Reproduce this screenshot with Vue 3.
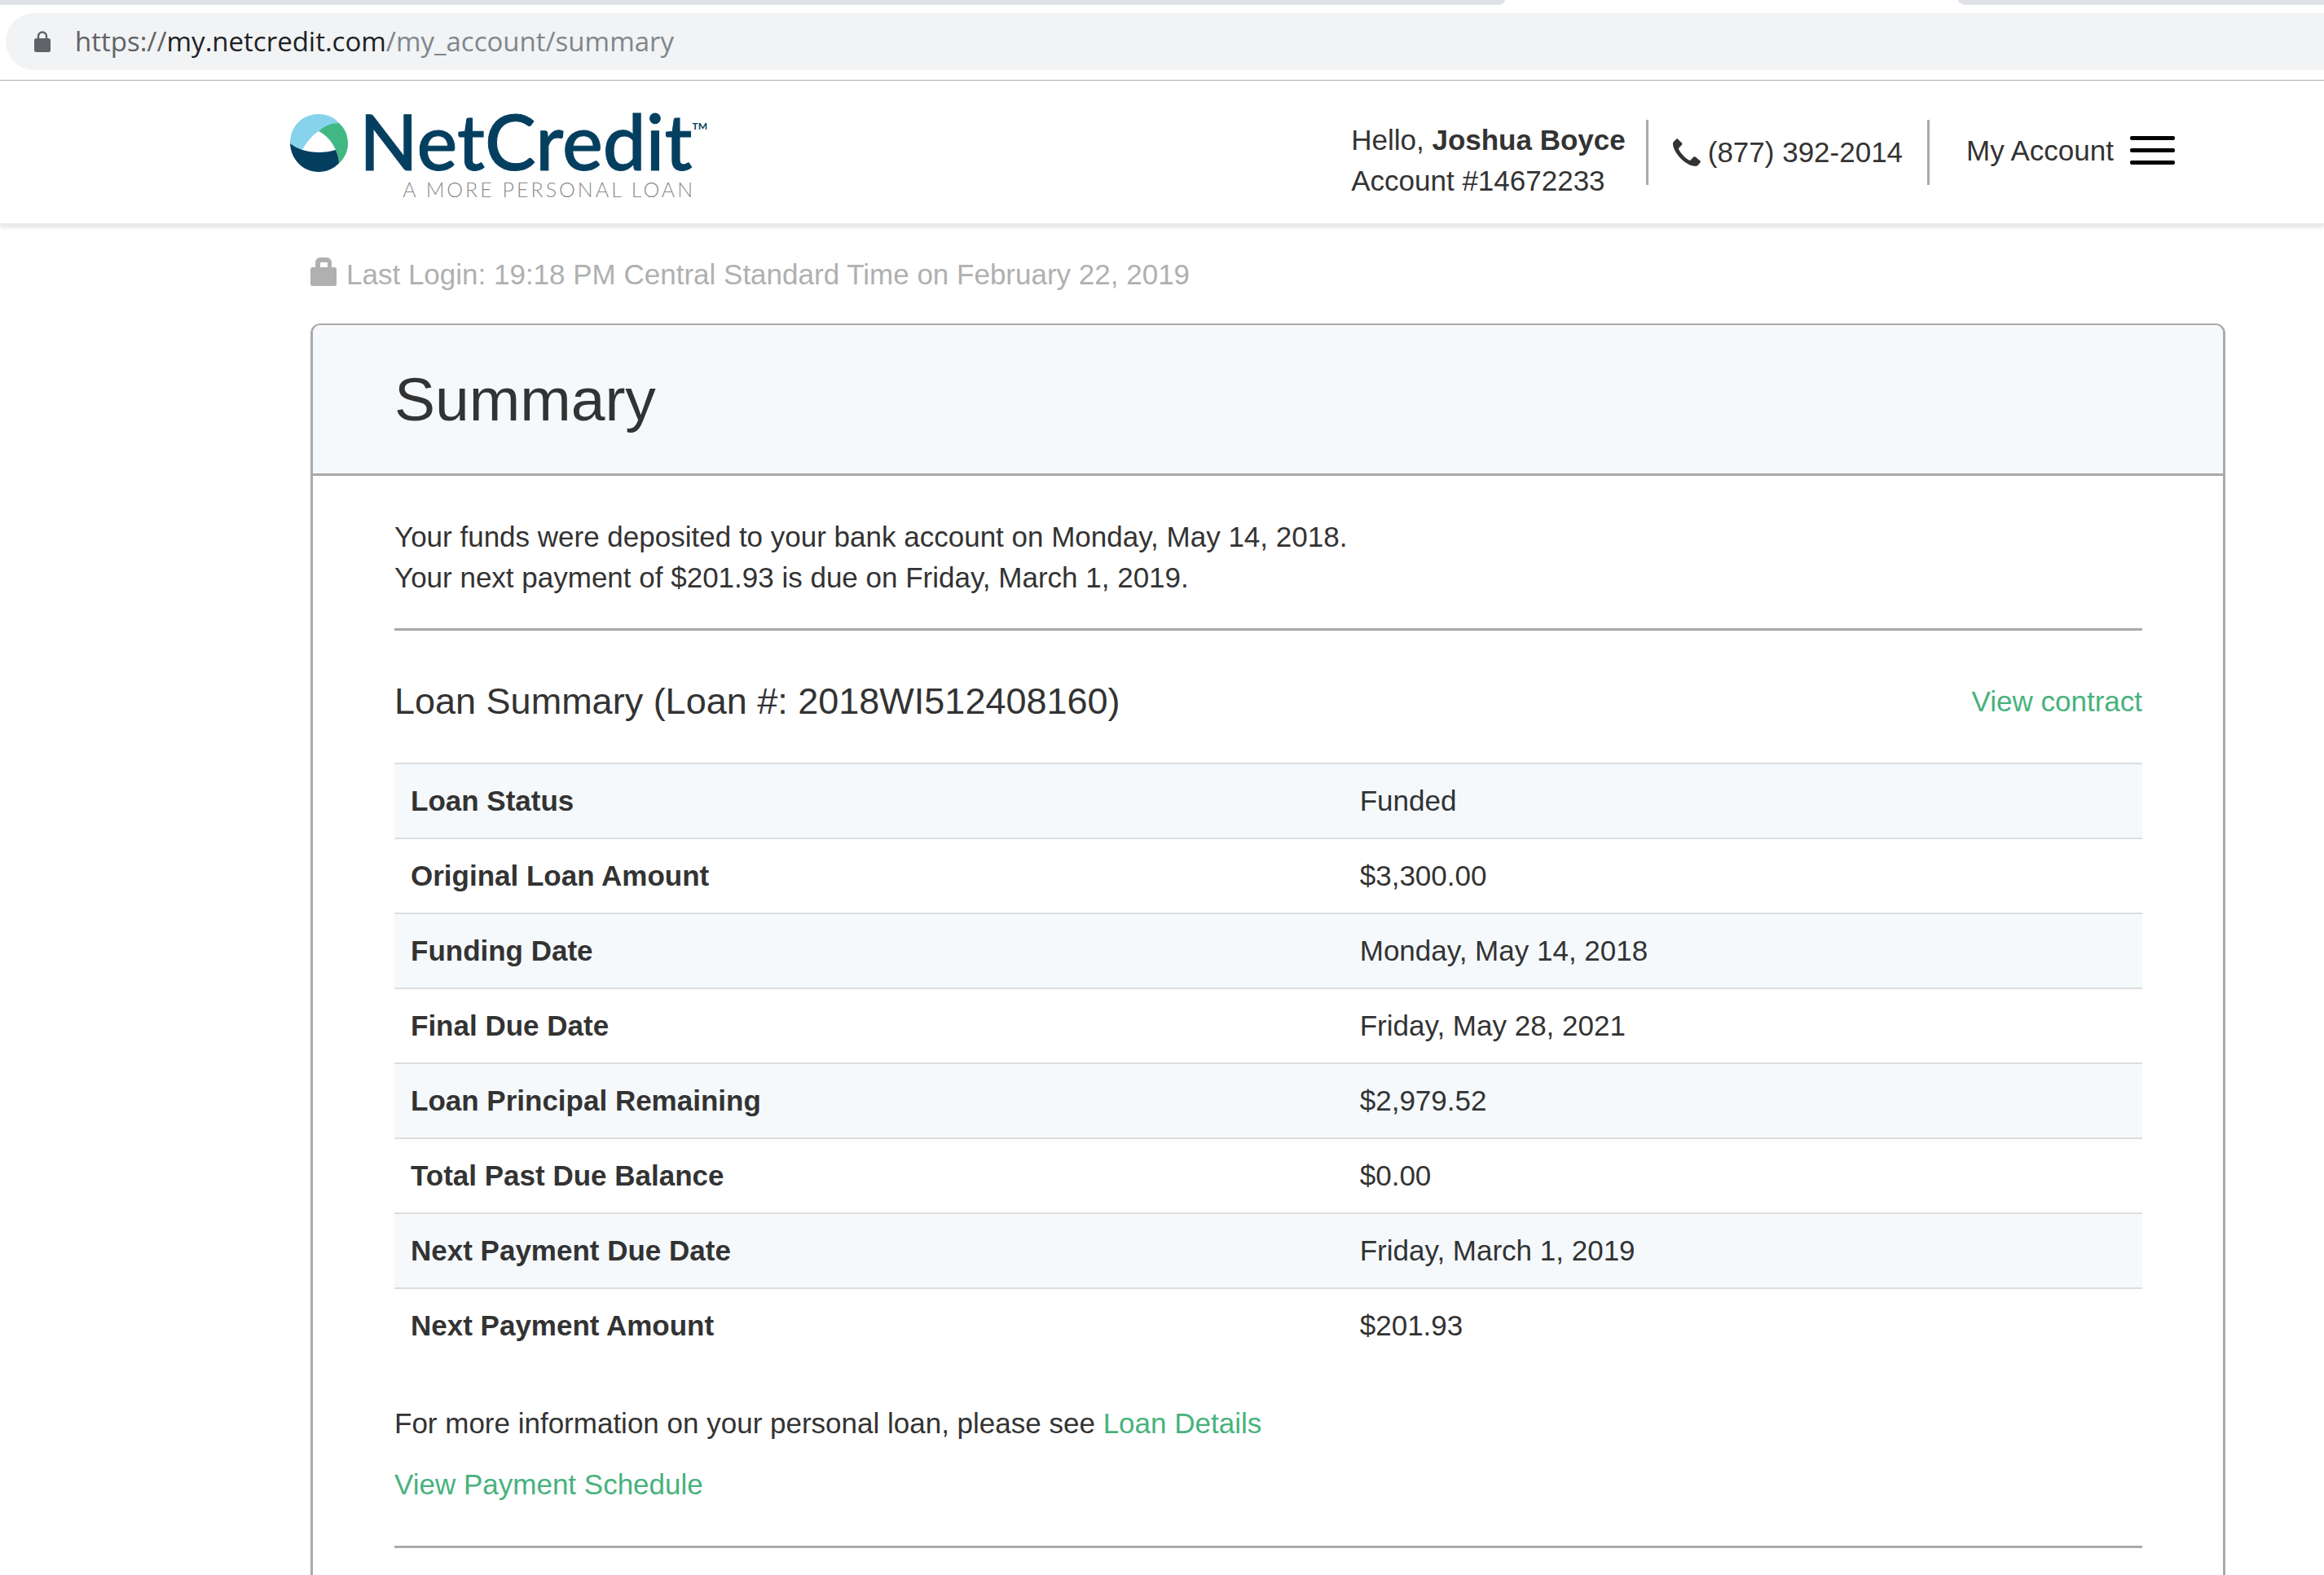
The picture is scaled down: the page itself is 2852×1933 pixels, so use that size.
<script setup>
const loanRows = [
  { label: 'Loan Status', value: 'Funded' },
  { label: 'Original Loan Amount', value: '$3,300.00' },
  { label: 'Funding Date', value: 'Monday, May 14, 2018' },
  { label: 'Final Due Date', value: 'Friday, May 28, 2021' },
  { label: 'Loan Principal Remaining', value: '$2,979.52' },
  { label: 'Total Past Due Balance', value: '$0.00' },
  { label: 'Next Payment Due Date', value: 'Friday, March 1, 2019' },
  { label: 'Next Payment Amount', value: '$201.93' },
]
</script>

<template>
  <div class="window">
    <div class="browser">
      <div class="tabs">
        <span class="tab tab-left"></span>
        <span class="tab-active"></span>
        <span class="tab tab-right"></span>
      </div>
      <div class="address">
        <svg class="address-lock" viewBox="0 0 20 26" aria-hidden="true">
          <path d="M5 11V6.500a5 5 0 0 1 10 0V11" fill="none" stroke="#5f6368" stroke-width="2.400" />
          <rect x="0" y="9" width="20" height="17" rx="2.500" fill="#5f6368" />
        </svg>
        <span class="url"><span class="scheme">https://</span><span class="host">my.netcredit.com</span><span class="path">/my_account/summary</span></span>
      </div>
    </div>

    <header class="site-header">
      <a class="logo" href="#" aria-label="NetCredit home">
        <svg class="logo-mark" viewBox="0 0 71 71" aria-hidden="true">
          <path d="M0 36C0 14 16 0 35 0C46 0 54 4 60 11C50 12 42 16 35 21C26 27 20 35 15 44C9 42 4 39 0 36Z" fill="#87d3ec" />
          <path d="M60 11C67 17 71 26 71 36C71 46 67 54 60 60.500C60 54 58 49 56 44C52 35 45 26 35 21C42 15 50 11 60 11Z" fill="#41b883" />
          <path d="M0 36C4 39 9 42 15 44C28 48 43 48 56 44C58 49 60 54 60 60.500C53 67 45 71 35 71C16 71 1 56 0 36Z" fill="#053f60" />
        </svg>
        <span class="logo-text">
          <span class="logo-name">NetCredit<span class="tm">TM</span></span>
          <span class="logo-tagline">A MORE PERSONAL LOAN</span>
        </span>
      </a>
      <div class="tools">
        <div class="account">
          <div>Hello, <strong>Joshua Boyce</strong></div>
          <div>Account #14672233</div>
        </div>
        <a class="phone" href="tel:8773922014">
          <svg class="phone-icon" viewBox="0 0 34 34" aria-hidden="true">
            <path d="M5.500 0.300L11 5.500C11.600 6.200 11.500 7 11 7.700L7.500 11.500C7 12.300 7 12.800 7.500 14C10 18.500 14.500 23.500 19.500 26.500C20.500 27 21.200 27 22 26L25.500 22.600C26.300 22 27.200 22 28 22.700L33.500 27.500C34.200 28.200 34 28.800 33.500 29.500L30.500 33C29.500 34 28 34 26 33.800C19 33 12 27.500 6.500 21C2.500 16 0 11 0 6.500C0 5 0.500 4.200 1.500 3.300L4.500 0.400C5 0 5.200 0 5.500 0.300Z" fill="#333" />
          </svg>
          <span>(877) 392-2014</span>
        </a>
        <button class="menu" type="button">
          <span>My Account</span>
          <span class="bars"><i></i><i></i><i></i></span>
        </button>
      </div>
    </header>

    <main class="content">
      <p class="last-login">
        <svg class="login-lock" viewBox="0 0 32 35" aria-hidden="true">
          <path d="M6 13V6a6 6 0 0 1 6-6h8a6 6 0 0 1 6 6V13H21V7a1 1 0 0 0-1-1H13a1 1 0 0 0-1 1V13Z" fill="#b0b0b0" />
          <rect y="12" width="32" height="23" rx="2.500" fill="#b0b0b0" />
        </svg>
        <span>Last Login: 19:18 PM Central Standard Time on February 22, 2019</span>
      </p>

      <section class="panel">
        <div class="panel-heading"><h1>Summary</h1></div>
        <div class="panel-body">
          <p>
            Your funds were deposited to your bank account on Monday, May 14, 2018.<br />
            Your next payment of $201.93 is due on Friday, March 1, 2019.
          </p>
          <hr class="rule" />
          <div class="loan-title">
            <h2>Loan Summary (Loan #: 2018WI512408160)</h2>
            <a href="#">View contract</a>
          </div>
          <table class="loan-table">
            <tbody>
              <tr v-for="row in loanRows" :key="row.label">
                <th scope="row">{{ row.label }}</th>
                <td>{{ row.value }}</td>
              </tr>
            </tbody>
          </table>
          <p class="more">For more information on your personal loan, please see <a href="#">Loan Details</a></p>
          <p class="schedule"><a href="#">View Payment Schedule</a></p>
          <hr class="rule rule-last" />
        </div>
      </section>
    </main>
  </div>
</template>

<style>
body {
  margin: 0;
  background: #fff;
}
</style>

<style scoped>
.window {
  display: flex;
  flex-direction: column;
  min-height: 100vh;
  color: #333;
  font-family: "Liberation Sans", Arial, sans-serif;
  font-size: 35px;
  line-height: 50px;
}
.window * {
  box-sizing: border-box;
}
p,
h1,
h2 {
  margin: 0;
  font-weight: 400;
}
a {
  color: #48b27c;
  text-decoration: none;
}

.browser {
  padding-bottom: 12px;
  border-bottom: 1px solid #b3b3b5;
}
.tabs {
  display: flex;
  height: 6px;
}
.tab {
  background: #dee1e6;
}
.tab-left {
  flex: 1847;
  border-bottom-right-radius: 10px 6px;
}
.tab-active {
  flex: 556;
}
.tab-right {
  flex: 449;
  border-bottom-left-radius: 10px 6px;
}
.address {
  display: flex;
  align-items: center;
  gap: 30px;
  height: 70px;
  margin: 10px 0 0 7px;
  padding-left: 35px;
  border-radius: 35px 0 0 35px;
  background: #f1f3f4;
}
.address-lock {
  width: 20px;
  height: 26px;
}
.url {
  font-family: "Open Sans", "Noto Sans", sans-serif;
  font-size: 33px;
}
.scheme {
  color: #5f6368;
}
.host {
  color: #202124;
}
.path {
  color: #80868b;
}

.site-header {
  display: flex;
  justify-content: space-between;
  align-items: flex-start;
  height: 178px;
  padding: 41px 183px 0 356px;
  border-bottom: 3px solid #ebebeb;
  box-shadow: 0 2px 5px rgba(0, 0, 0, 0.12);
}
.logo {
  display: flex;
  gap: 14px;
  color: #053f60;
  font-family: Lato, sans-serif;
}
.logo-mark {
  width: 71px;
  height: 71px;
}
.logo-text {
  display: flex;
  flex-direction: column;
}
.logo-name {
  display: flex;
  font-size: 94px;
  font-weight: 500;
  line-height: 66px;
  -webkit-text-stroke: 1px currentColor;
}
.tm {
  font-size: 12px;
  font-weight: 700;
  line-height: 30px;
  -webkit-text-stroke: 0;
}
.logo-tagline {
  align-self: flex-end;
  margin-right: 15px;
  color: #8a8a8a;
  font-size: 25px;
  font-weight: 300;
  letter-spacing: 3px;
  line-height: 52px;
}
.tools {
  display: flex;
  align-items: flex-start;
  padding-top: 7px;
}
.account {
  padding-right: 25px;
}
.phone {
  display: flex;
  align-items: center;
  gap: 9px;
  height: 80px;
  padding: 0 30px;
  border-right: 3px solid #aaa;
  border-left: 3px solid #aaa;
  color: #333;
}
.phone-icon {
  width: 34px;
  height: 34px;
}
.menu {
  display: flex;
  align-items: center;
  gap: 20px;
  height: 75px;
  padding: 0 0 0 45px;
  border: 0;
  background: none;
  color: #333;
  font: inherit;
}
.bars {
  display: flex;
  flex-direction: column;
  gap: 10px;
  width: 55px;
}
.bars i {
  height: 5px;
  border-radius: 2px;
  background: #000;
}

.content {
  display: flex;
  flex: 1;
  flex-direction: column;
  padding: 35px 121px 0 381px;
}
.last-login {
  display: flex;
  gap: 12px;
  margin-bottom: 35px;
  color: #b0b0b0;
}
.login-lock {
  width: 32px;
  height: 35px;
  margin-top: 4px;
}
.panel {
  flex: 1;
  border: 3px solid #aaa;
  border-top-width: 2px;
  border-bottom: 0;
  border-radius: 12px 12px 0 0;
}
.panel-heading {
  padding: 50px 100px;
  border-bottom: 3px solid #aaa;
  border-radius: 9px 9px 0 0;
  background: #f5f9fc;
}
h1 {
  font-size: 75px;
  line-height: 82px;
}
.panel-body {
  padding: 50px 99px 0 100px;
}
.rule {
  height: 3px;
  margin: 37px 0 0;
  border: 0;
  background: #aaa;
}
.rule-last {
  margin-top: 50px;
}
.loan-title {
  display: flex;
  justify-content: space-between;
  margin: 62px 0 50px;
}
h2 {
  font-size: 45px;
  line-height: 50px;
}
.loan-table {
  width: 100%;
  border-collapse: separate;
  border-spacing: 0;
  table-layout: fixed;
}
.loan-table th,
.loan-table td {
  padding: 20px;
  border-top: 2px solid #ddd;
  text-align: left;
}
.loan-table th {
  width: 54.3%;
}
.loan-table tr:nth-child(odd) {
  background: #f5f9fc;
}
.more {
  margin-top: 50px;
}
.schedule {
  margin-top: 25px;
}
</style>
